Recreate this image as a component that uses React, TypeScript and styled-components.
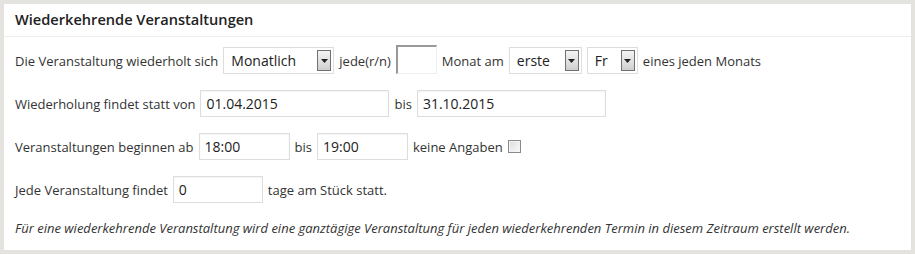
import React from "react";
import styled, { createGlobalStyle } from "styled-components";

const GlobalStyle = createGlobalStyle`
  html, body {
    margin: 0;
    padding: 0;
    background: #e4e3de;
  }
  body {
    font-family: "Open Sans", "Liberation Sans", sans-serif;
    color: #444;
  }
`;

function Select({ value, width }: { value: string; width: number }) {
  return (
    <SelectBox $width={width}>
      <SelectValue>{value}</SelectValue>
      <SelectArrow>
        <svg width="7" height="4" viewBox="0 0 7 4">
          <path d="M0 0h7L3.5 4z" fill="#222" />
        </svg>
      </SelectArrow>
    </SelectBox>
  );
}

function App() {
  return (
    <>
      <GlobalStyle />
      <Page>
        <Panel>
          <Header>Wiederkehrende Veranstaltungen</Header>
          <Body>
            <Row>
              <Label>Die Veranstaltung wiederholt sich</Label>
              <Select value="Monatlich" width={111} />
              <Label>jede(r/n)</Label>
              <InsetInput />
              <Label>Monat am</Label>
              <Select value="erste" width={73} />
              <Select value="Fr" width={51} />
              <Label>eines jeden Monats</Label>
            </Row>
            <Row>
              <Label>Wiederholung findet statt von</Label>
              <TextInput $width={189}>01.04.2015</TextInput>
              <Label>bis</Label>
              <TextInput $width={189}>31.10.2015</TextInput>
            </Row>
            <Row>
              <Label>Veranstaltungen beginnen ab</Label>
              <TextInput $width={91}>18:00</TextInput>
              <Label>bis</Label>
              <TextInput $width={91}>19:00</TextInput>
              <Label>keine Angaben</Label>
              <Checkbox />
            </Row>
            <Row>
              <Label>Jede Veranstaltung findet</Label>
              <TextInput $width={90}>0</TextInput>
              <Label>tage am Stück statt.</Label>
            </Row>
            <Note>
              Für eine wiederkehrende Veranstaltung wird eine ganztägige
              Veranstaltung für jeden wiederkehrenden Termin in diesem Zeitraum
              erstellt werden.
            </Note>
          </Body>
        </Panel>
      </Page>
    </>
  );
}

const Page = styled.div`
  width: 915px;
  height: 254px;
  padding: 3px;
  box-sizing: border-box;
`;

const Panel = styled.div`
  width: 909px;
  height: 248px;
  background: #fff;
  border: 1px solid #e2e2e2;
  box-sizing: border-box;
`;

const Header = styled.div`
  height: 33px;
  box-sizing: border-box;
  padding: 5px 11px 0;
  font-size: 14.6px;
  font-weight: 600;
  color: #222;
  border-bottom: 1px solid #eee;
`;

const Body = styled.div`
  padding: 10px 11px 0;
  display: flex;
  flex-direction: column;
  gap: 16px;
`;

const Row = styled.div`
  display: flex;
  align-items: center;
  gap: 5px;
  height: 27px;
  font-size: 13px;
  color: #333;
`;

const Label = styled.span`
  white-space: nowrap;
`;

const SelectBox = styled.div<{ $width: number }>`
  width: ${(p) => p.$width}px;
  height: 27px;
  box-sizing: border-box;
  border: 1px solid #ddd;
  background: #fff;
  display: flex;
  align-items: center;
  justify-content: space-between;
  padding: 0 2px 0 7px;
`;

const SelectValue = styled.span`
  font-size: 14px;
  color: #222;
`;

const SelectArrow = styled.div`
  width: 14px;
  height: 21px;
  box-sizing: border-box;
  border: 1px solid #707070;
  background: linear-gradient(#f4f4f4, #cfcfcf);
  display: flex;
  align-items: center;
  justify-content: center;
`;

const InsetInput = styled.div`
  width: 41px;
  height: 29px;
  box-sizing: border-box;
  border-style: solid;
  border-width: 2px 1px 1px 2px;
  border-color: #999 #eee #eee #999;
  background: #fff;
  margin-top: -3px;
`;

const TextInput = styled.div<{ $width: number }>`
  width: ${(p) => p.$width}px;
  height: 27px;
  box-sizing: border-box;
  border: 1px solid #ddd;
  box-shadow: inset 0 1px 2px rgba(0, 0, 0, 0.05);
  background: #fff;
  padding: 0 5px;
  display: flex;
  align-items: center;
  font-size: 14px;
  color: #222;
`;

const Checkbox = styled.div`
  width: 13px;
  height: 13px;
  box-sizing: border-box;
  border: 1px solid #8a8a8a;
  background: linear-gradient(135deg, #dcdcdc, #fafafa);
  box-shadow: inset 0 0 0 1px #f4f4f4;
`;

const Note = styled.div`
  font-size: 13px;
  font-style: italic;
  color: #333;
`;

export default App;
